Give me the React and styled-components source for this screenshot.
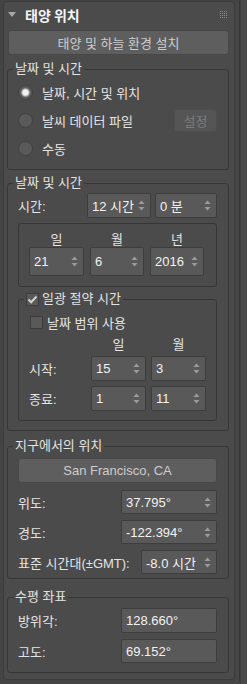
import React from "react";
import styled, { createGlobalStyle } from "styled-components";

const Global = createGlobalStyle`
  html, body { margin: 0; padding: 0; background: #444444; }
  body {
    font-family: "Liberation Sans", "Noto Sans CJK KR", sans-serif;
    font-size: 13px;
    color: #e4e4e4;
  }
  * { box-sizing: border-box; }
`;

const Screen = styled.div`
  width: 247px;
  height: 684px;
  display: flex;
  align-items: flex-start;
  background: #444444;
  overflow: hidden;
`;

const Panel = styled.div`
  margin: 1px 0 0 3px;
  width: 232px;
  background: #4b4b4b;
  border: 1px solid #3b3b3b;
  border-radius: 4px;
  padding: 0 5px 6px 3px;
  display: flex;
  flex-direction: column;
`;

const Gutter = styled.div`
  margin-left: 1px;
  width: 11px;
  height: 684px;
  display: flex;
`;

const GutterInner = styled.div`
  width: 4px;
  height: 682px;
  margin-top: 1px;
  background: #474747;
  border-right: 1px solid #363636;
  border-radius: 0 0 2px 2px;
`;

const GutterTrack = styled.div`
  flex: 1;
  background: #4a4a4a;
  border-left: 1px solid #3e3e3e;
`;

const Header = styled.div`
  height: 25px;
  display: flex;
  align-items: center;
  padding: 0 2px 0 1px;
`;

const Title = styled.span`
  margin-left: 9px;
  font-family: "Noto Sans CJK KR", sans-serif;
  font-weight: 700;
  font-size: 14px;
  color: #f4f4f4;
  flex: 1;
`;

const Button = styled.div`
  height: ${(p) => p.$h || 25}px;
  margin: ${(p) => p.$m || "0"};
  display: flex;
  align-items: center;
  justify-content: center;
  background: ${(p) => (p.$disabled ? "#555555" : "#5e5e5e")};
  border: 1px solid ${(p) => (p.$disabled ? "#4d4d4d" : "#474747")};
  border-radius: 3px;
  color: ${(p) => (p.$disabled ? "#7c7c7c" : "#cdcdcd")};
  width: ${(p) => (p.$w ? p.$w + "px" : "auto")};
  white-space: nowrap;
`;

const Group = styled.fieldset`
  margin: ${(p) => p.$mt || 0}px 0 0 0;
  padding: ${(p) => p.$pt || 0}px ${(p) => (p.$pr === undefined ? 11 : p.$pr)}px
    ${(p) => p.$pb || 0}px 10px;
  border: 1px solid #363636;
  border-radius: 3px;
  min-width: 0;
  display: flex;
  flex-direction: column;
`;

const Legend = styled.legend`
  margin-left: -5px;
  padding: 0 2px;
  height: 16px;
  line-height: 16px;
  display: flex;
  align-items: center;
  gap: 3px;
  color: #e2e2e2;
  white-space: nowrap;
`;

const RadioRow = styled.div`
  height: 24px;
  display: flex;
  align-items: center;
  margin-top: ${(p) => p.$mt || 0}px;
`;

const Radio = styled.span`
  width: 15px;
  height: 15px;
  border-radius: 50%;
  background: ${(p) =>
    p.$on
      ? "radial-gradient(circle, #f2f2f2 0 2.6px, #bdbdbd 3.4px, #6a6a6a 4.6px, #5a5a5a 5.2px)"
      : "#5a5a5a"};
  border: 1px solid #3f3f3f;
  flex: none;
`;

const RadioLabel = styled.span`
  margin-left: 9px;
  flex: 1;
  white-space: nowrap;
`;

const Row = styled.div`
  display: flex;
  align-items: center;
  justify-content: space-between;
  height: ${(p) => p.$h || 25}px;
  margin-top: ${(p) => p.$mt || 0}px;
`;

const Label = styled.span`
  color: #e4e4e4;
  white-space: nowrap;
`;

const SpinGrid = styled.div`
  display: grid;
  grid-template-columns: ${(p) => p.$cols};
  column-gap: ${(p) => p.$gap || 0}px;
  align-items: center;
  height: ${(p) => p.$h}px;
  margin-top: ${(p) => p.$mt || 0}px;
`;

const Head = styled.span`
  text-align: center;
  line-height: 14px;
  color: #e4e4e4;
`;

const Box = styled.div`
  margin-top: ${(p) => p.$mt || 0}px;
  border: 1px solid #363636;
  border-radius: 3px;
  padding: 9px 12px 10px 10px;
  display: flex;
  flex-direction: column;
`;

const SpinBox = styled.div`
  display: flex;
  align-items: center;
  height: ${(p) => p.$h || 25}px;
  width: ${(p) => (p.$w ? p.$w + "px" : "100%")};
  background: #595959;
  border: 1px solid #3d3d3d;
  border-radius: 2px;
  padding: 0 5px 0 4px;
  color: #f2f2f2;
`;

const SpinValue = styled.span`
  flex: 1;
  white-space: nowrap;
  overflow: hidden;
`;

const CheckBox = styled.span`
  width: 13px;
  height: 13px;
  background: #595959;
  border: 1px solid #3c3c3c;
  display: flex;
  align-items: center;
  justify-content: center;
  flex: none;
`;

const CheckRow = styled.div`
  height: 16px;
  display: flex;
  align-items: center;
  gap: 4px;
  margin-left: 1px;
`;

const Arrows = () => (
  <svg width="7" height="11" viewBox="0 0 7 11">
    <path d="M3.5 0.5 L6.5 4 L0.5 4 Z" fill="#9b9b9b" />
    <path d="M0.5 7 L6.5 7 L3.5 10.5 Z" fill="#9b9b9b" />
  </svg>
);

const Spinner = ({ value, w, h, arrows = true }) => (
  <SpinBox $w={w} $h={h}>
    <SpinValue>{value}</SpinValue>
    {arrows && <Arrows />}
  </SpinBox>
);

const Triangle = () => (
  <svg width="8" height="6" viewBox="0 0 8 6">
    <path d="M0 0 L8 0 L4 5 Z" fill="#a8a8a8" />
  </svg>
);

const Grip = () => {
  const dots = [];
  for (let r = 0; r < 4; r++)
    for (let c = 0; c < 4; c++)
      dots.push(<rect key={r + "-" + c} x={c * 2} y={r * 2} width="1" height="1" fill="#8d8d8d" />);
  return (
    <svg width="7" height="7" viewBox="0 0 7 7">
      {dots}
    </svg>
  );
};

const Check = () => (
  <svg width="11" height="9" viewBox="0 0 11 9">
    <path d="M1.5 4.5 L4.2 7.2 L9.5 1.5" stroke="#d2d2d2" strokeWidth="2" fill="none" />
  </svg>
);

export default function App() {
  return (
    <>
      <Global />
      <Screen>
        <Panel>
          <Header>
            <Triangle />
            <Title>태양 위치</Title>
            <Grip />
          </Header>
          <Button $m="3px 0 0 1px">태양 및 하늘 환경 설치</Button>

          <Group $mt={6} $pt={3} $pb={9}>
            <Legend>날짜 및 시간</Legend>
            <RadioRow>
              <Radio $on />
              <RadioLabel>날짜, 시간 및 위치</RadioLabel>
            </RadioRow>
            <RadioRow $mt={4}>
              <Radio />
              <RadioLabel>날씨 데이터 파일</RadioLabel>
              <Button $w={43} $h={23} $disabled>
                설정
              </Button>
            </RadioRow>
            <RadioRow $mt={4}>
              <Radio />
              <RadioLabel>수동</RadioLabel>
            </RadioRow>
          </Group>

          <Group $mt={5} $pt={2} $pb={9}>
            <Legend>날짜 및 시간</Legend>
            <SpinGrid $cols="1fr 64px 62px" $gap={4} $h={25}>
              <Label>시간:</Label>
              <Spinner value="12 시간" />
              <Spinner value="0 분" />
            </SpinGrid>
            <Box $mt={5}>
              <SpinGrid $cols="55px 54px 54px" $gap={6} $h={14}>
                <Head>일</Head>
                <Head>월</Head>
                <Head>년</Head>
              </SpinGrid>
              <SpinGrid $cols="55px 54px 54px" $gap={6} $h={29}>
                <Spinner value="21" h={29} />
                <Spinner value="6" h={29} />
                <Spinner value="2016" h={29} />
              </SpinGrid>
            </Box>
            <Group $mt={4} $pt={7} $pb={9} $pr={10}>
              <Legend>
                <CheckBox>
                  <Check />
                </CheckBox>
                <span>일광 절약 시간</span>
              </Legend>
              <CheckRow>
                <CheckBox />
                <span>날짜 범위 사용</span>
              </CheckRow>
              <SpinGrid $cols="57px 55px 55px" $gap={5} $h={14} $mt={8}>
                <span />
                <Head>일</Head>
                <Head>월</Head>
              </SpinGrid>
              <SpinGrid $cols="57px 55px 55px" $gap={5} $h={25} $mt={4}>
                <Label>시작:</Label>
                <Spinner value="15" />
                <Spinner value="3" />
              </SpinGrid>
              <SpinGrid $cols="57px 55px 55px" $gap={5} $h={25} $mt={5}>
                <Label>종료:</Label>
                <Spinner value="1" />
                <Spinner value="11" />
              </SpinGrid>
            </Group>
          </Group>

          <Group $mt={7} $pt={4} $pb={4}>
            <Legend>지구에서의 위치</Legend>
            <Button>San Francisco, CA</Button>
            <Row $h={24} $mt={7}>
              <Label>위도:</Label>
              <Spinner value="37.795°" w={96} h={24} />
            </Row>
            <Row $h={24} $mt={6}>
              <Label>경도:</Label>
              <Spinner value="-122.394°" w={96} h={24} />
            </Row>
            <Row $h={24} $mt={6}>
              <Label>표준 시간대(±GMT):</Label>
              <Spinner value="-8.0 시간" w={76} h={24} />
            </Row>
          </Group>

          <Group $mt={10} $pt={3} $pb={9}>
            <Legend>수평 좌표</Legend>
            <Row $h={25}>
              <Label>방위각:</Label>
              <Spinner value="128.660°" w={96} h={25} arrows={false} />
            </Row>
            <Row $h={24} $mt={6}>
              <Label>고도:</Label>
              <Spinner value="69.152°" w={96} h={24} arrows={false} />
            </Row>
          </Group>
        </Panel>
        <Gutter>
          <GutterInner />
          <GutterTrack />
        </Gutter>
      </Screen>
    </>
  );
}
